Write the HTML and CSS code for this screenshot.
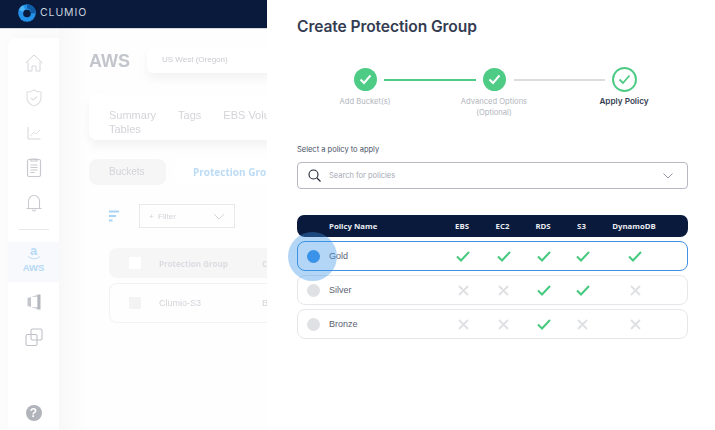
FILE: index.html
```html
<!DOCTYPE html>
<html lang="en">
<head>
<meta charset="utf-8">
<title>Create Protection Group</title>
<link rel="stylesheet" href="styles.css">
</head>
<body>
<div class="app">
  <section class="backdrop">
    <header class="topbar">
      <svg class="logo" width="18" height="18" viewBox="0 0 18 18"><circle cx="9" cy="9" r="8.800" fill="#2391e8"/><path d="M9 .200A8.800 8.800 0 0 1 17.800 9L13 9.500A4.500 4.500 0 0 0 9 4.500z" fill="#0f5ca6"/><path d="M1 5.500A8.800 8.800 0 0 1 5 1.200L7 5 4.600 8z" fill="#4db4f5"/><circle cx="9" cy="9.500" r="3.800" fill="#0a1a3c"/></svg>
      <span class="brand">CLUMIO</span>
    </header>
    <div class="shell">
      <nav class="sidebar">
        <svg class="nav-icon" width="20" height="20" viewBox="0 0 20 20" fill="none" stroke="#d5d6da" stroke-width="1"><path d="M1.500 10 10 2l8.500 8M4 8.500V18h4v-5h4v5h4V8.500"/></svg>
        <svg class="nav-icon" width="20" height="20" viewBox="0 0 20 20" fill="none" stroke="#e0e1e4" stroke-width="1.200"><path d="M10 2c2 1.500 4 2 7 2.200V10c0 4-3 6.500-7 8-4-1.500-7-4-7-8V4.200C6 4 8 3.500 10 2z"/><path d="m7 10 2 2 4-3.500"/></svg>
        <svg class="nav-icon" width="20" height="20" viewBox="0 0 20 20" fill="none" stroke="#d5d6da" stroke-width="1"><path d="M4 4v12h12.500"/><path d="m6 13 3.500-3.500 2.500 1.500 4-4" stroke="#e0e1e4"/></svg>
        <svg class="nav-icon" width="20" height="20" viewBox="0 0 20 20" fill="none" stroke="#c9cad0" stroke-width="1.200"><rect x="3.500" y="1.500" width="13" height="17" rx="1.500"/><path d="M7 1h6v2H7zM6.500 7h7M6.500 9.500h7M6.500 12h7M6.500 14.500h4"/></svg>
        <svg class="nav-icon" width="20" height="20" viewBox="0 0 20 20" fill="none" stroke="#c9cad0" stroke-width="1.100"><path d="M4.500 15V8a5.500 5.500 0 0 1 11 0v7M2.500 15.500h15M8.500 16.500a1.500 1.500 0 0 0 3 0"/></svg>
        <div class="nav-rule"></div>
        <div class="nav-aws">
          <span class="aws-a">a</span>
          <svg width="14" height="4" viewBox="0 0 14 4" fill="none" stroke="#bcdcf6" stroke-width="1"><path d="M1 .500c4 3 8 3 12 0"/></svg>
          <span class="aws-label">AWS</span>
        </div>
        <svg class="nav-icon" width="20" height="20" viewBox="0 0 20 20"><path d="M3.500 6 7 5v10l-3.500-1z" fill="#c4c6cc"/><path d="M7 5l7-2.500v15L7 15h6.500V5z" fill="#d4d5da"/><path d="M13.500 2.500h3v15h-3z" fill="#b5b7be"/></svg>
        <svg class="nav-icon" width="20" height="20" viewBox="0 0 20 20" fill="none" stroke="#bfc1c7" stroke-width="1.100"><rect x="7" y="2" width="11" height="11" rx="1.500"/><rect x="2" y="7.500" width="11" height="11" rx="1.500"/></svg>
        <div class="help">?</div>
      </nav>
      <main class="content">
        <div class="title-row">
          <h2 class="aws-title">AWS</h2>
          <div class="region">US West (Oregon)</div>
        </div>
        <div class="tabs"><div class="tab-line"><span>Summary</span><span>Tags</span><span>EBS Volumes</span></div><div>Tables</div></div>
        <div class="subtabs">
          <div class="subtab">Buckets</div>
          <div class="subtab active">Protection Groups</div>
        </div>
        <div class="filter-row">
          <svg width="12" height="12" viewBox="0 0 12 12" fill="none" stroke="#a9d3f5" stroke-width="1.800"><path d="M0 1.500h10M0 6h7M0 10.500h3.500"/></svg>
          <div class="filter"><span>+ &nbsp;Filter</span>
            <svg width="12" height="7" viewBox="0 0 12 7" fill="none" stroke="#d5d6da"><path d="m1 1 5 5 5-5"/></svg>
          </div>
        </div>
        <div class="bg-table-head"><i class="box white"></i><span class="pg">Protection Group</span><span>C</span></div>
        <div class="bg-table-row"><i class="box grey"></i><span class="pg">Clumio-S3</span><span>B</span></div>
      </main>
    </div>
  </section>

  <section class="panel">
    <h1 class="panel-title">Create Protection Group</h1>
    <div class="stepper">
      <div class="step">
        <span class="dot done"><svg width="13" height="11" viewBox="0 0 13 11" fill="none" stroke="#fff" stroke-width="2"><path d="m1.500 5.500 3.500 3.500 6.500-7.500"/></svg></span>
        <span class="step-label">Add Bucket(s)</span>
      </div>
      <div class="line green"></div>
      <div class="step">
        <span class="dot done"><svg width="13" height="11" viewBox="0 0 13 11" fill="none" stroke="#fff" stroke-width="2"><path d="m1.500 5.500 3.500 3.500 6.500-7.500"/></svg></span>
        <span class="step-label">Advanced Options<br>(Optional)</span>
      </div>
      <div class="line grey"></div>
      <div class="step">
        <span class="dot current"><svg width="13" height="11" viewBox="0 0 13 11" fill="none" stroke="#4ecb85" stroke-width="1.800"><path d="m1.500 5.500 3.500 3.500 6.500-7.500"/></svg></span>
        <span class="step-label strong">Apply Policy</span>
      </div>
    </div>
    <label class="field-label">Select a policy to apply</label>
    <div class="search">
      <svg width="13" height="13" viewBox="0 0 13 13" fill="none" stroke="#1c2230" stroke-width="1.100"><circle cx="5.500" cy="5.500" r="4.500"/><path d="m9 9 3.500 3.500"/></svg>
      <span class="placeholder">Search for policies</span>
      <svg class="chev" width="10" height="6" viewBox="0 0 10 6" fill="none" stroke="#8d93a0" stroke-width="1"><path d="m.5.500 4.500 4.500L9.500.500"/></svg>
    </div>
    <div class="table">
      <div class="row head"><span></span><span class="name">Policy Name</span><span>EBS</span><span>EC2</span><span>RDS</span><span>S3</span><span>DynamoDB</span></div>
      <div class="row policy selected"><i class="radio on"></i><span class="name">Gold</span>
        <svg class="yes" viewBox="0 0 14 11"><path d="m1 5.500 4 4 8-8.500"/></svg><svg class="yes" viewBox="0 0 14 11"><path d="m1 5.500 4 4 8-8.500"/></svg><svg class="yes" viewBox="0 0 14 11"><path d="m1 5.500 4 4 8-8.500"/></svg><svg class="yes" viewBox="0 0 14 11"><path d="m1 5.500 4 4 8-8.500"/></svg><svg class="yes" viewBox="0 0 14 11"><path d="m1 5.500 4 4 8-8.500"/></svg>
      </div>
      <div class="row policy"><i class="radio"></i><span class="name">Silver</span>
        <svg class="no" viewBox="0 0 11 11"><path d="m1 1 9 9M10 1l-9 9"/></svg><svg class="no" viewBox="0 0 11 11"><path d="m1 1 9 9M10 1l-9 9"/></svg><svg class="yes" viewBox="0 0 14 11"><path d="m1 5.500 4 4 8-8.500"/></svg><svg class="yes" viewBox="0 0 14 11"><path d="m1 5.500 4 4 8-8.500"/></svg><svg class="no" viewBox="0 0 11 11"><path d="m1 1 9 9M10 1l-9 9"/></svg>
      </div>
      <div class="row policy"><i class="radio"></i><span class="name">Bronze</span>
        <svg class="no" viewBox="0 0 11 11"><path d="m1 1 9 9M10 1l-9 9"/></svg><svg class="no" viewBox="0 0 11 11"><path d="m1 1 9 9M10 1l-9 9"/></svg><svg class="yes" viewBox="0 0 14 11"><path d="m1 5.500 4 4 8-8.500"/></svg><svg class="no" viewBox="0 0 11 11"><path d="m1 1 9 9M10 1l-9 9"/></svg><svg class="no" viewBox="0 0 11 11"><path d="m1 1 9 9M10 1l-9 9"/></svg>
      </div>
      <div class="pulse"></div>
    </div>
  </section>
</div>
</body>
</html>
```
FILE: styles.css
```css
* { box-sizing: border-box; }
html, body { margin: 0; height: 100%; overflow: hidden; background: #fff; }
body { font-family: "Liberation Sans", Arial, sans-serif; }
.app { display: flex; width: 715px; height: 430px; }

.backdrop { width: 267px; flex: none; overflow: hidden; display: flex; flex-direction: column; background: #fcfcfc; }
.topbar { height: 29px; flex: none; background: #0a1a3c; border-bottom: 1px solid #d6d8de; display: flex; align-items: center; padding: 0 0 3px 18px; gap: 4px; }
.logo { flex: none; }
.brand { color: #c9d2de; font: 400 10.500px "Inter", sans-serif; letter-spacing: .9px; }
.shell { flex: 1; display: flex; min-height: 0; filter: blur(.35px); }
.sidebar { width: 51px; margin: 9px 0 0 8px; flex: none; background: #fff; border-radius: 8px 0 0 0; box-shadow: 6px 0 12px rgba(220,222,228,.25); display: flex; flex-direction: column; align-items: center; padding-top: 15px; }
.nav-icon { display: block; margin-bottom: 15px; flex: none; }
.nav-rule { width: 30px; height: 1px; background: #e8e9ec; margin: 1px 0 12px; flex: none; }
.nav-aws { width: 100%; height: 40px; flex: none; background: #f7f9fc; display: flex; flex-direction: column; align-items: center; margin-bottom: 10px; color: #b6d9f6; padding-top: 2px; }
.aws-a { font: 700 13px/13px "Liberation Sans", sans-serif; }
.nav-aws svg { display: block; margin-top: -1px; }
.aws-label { font: 700 9.500px/11px "Liberation Sans", sans-serif; margin-top: 2px; }
.help { width: 16px; height: 16px; border-radius: 50%; background: #b2b4bb; color: #fff; font: 700 12px/16px "Liberation Sans", sans-serif; text-align: center; margin-top: auto; margin-bottom: 9px; flex: none; }

.content { flex: 1; min-width: 0; padding: 18px 0 0 30px; background: linear-gradient(90deg,#f8f8f9 0,#fefefe 28px); }
.title-row { display: flex; align-items: center; gap: 19px; height: 26px; }
.aws-title { margin: 0; color: #c3c5cc; font: 700 18px "Liberation Sans", sans-serif; width: 39px; flex: none; position: relative; top: 1px; }
.region { width: 130px; height: 26px; flex: none; background: #fff; font-size: 8px; line-height: 26px; padding-left: 15px; color: #c9cad0; box-shadow: 0 6px 9px rgba(215,217,224,.28); border-radius: 6px 0 0 6px; }
.tabs { width: 230px; height: 46px; margin-top: 21px; padding: 14px 0 0 20px; background: #fff; border-radius: 8px 0 0 8px; color: #d3d4d9; font-size: 11px; line-height: 14px; box-shadow: 0 6px 9px rgba(215,217,224,.28); white-space: nowrap; }
.tab-line { display: flex; gap: 22px; }
.subtabs { display: flex; margin-top: 19px; gap: 8px; height: 26px; }
.subtab { width: 77px; flex: none; border-radius: 8px; background: #f6f6f7; color: #d3d4d9; font-size: 10px; line-height: 25px; padding-left: 20px; }
.subtab.active { width: 120px; background: #fff; color: #bcdcf6; font: 700 10px/26px "Open Sans", sans-serif; padding-left: 19px; white-space: nowrap; }
.filter-row { display: flex; align-items: center; gap: 18px; margin-top: 19px; padding-left: 20px; height: 24px; }
.filter { width: 96px; height: 24px; flex: none; border: 1px solid #e8e9ec; display: flex; align-items: center; justify-content: space-between; padding: 0 9px; font-size: 8px; color: #d3d4d9; }
.bg-table-head, .bg-table-row { width: 200px; margin-left: 20px; display: flex; align-items: center; padding-left: 20px; font-size: 9px; color: #d3d4d9; }
.bg-table-head { height: 30px; margin-top: 20px; background: #f6f6f7; border-radius: 8px 0 0 8px; font: 700 8px "Open Sans", sans-serif; color: #dcdde0; }
.bg-table-row { height: 40px; margin-top: 5px; border: 1px solid #f2f2f4; border-right: 0; border-radius: 8px 0 0 8px; padding-left: 19px; }
.box { width: 12px; height: 12px; flex: none; margin-right: 18px; border-radius: 1px; }
.box.white { background: #fff; }
.box.grey { background: #f3f3f4; }
.pg { width: 103px; flex: none; }

.panel { flex: 1; min-width: 0; background: #fff; padding: 16px 27px 0 30px; }
.panel-title { margin: 0; color: #343c52; font: 600 15.600px/22px "Inter", sans-serif; letter-spacing: -.1px; }
.stepper { display: flex; align-items: flex-start; margin-top: 29px; height: 70px; padding-left: 32px; }
.step { width: 72px; flex: none; display: flex; flex-direction: column; align-items: center; }
.dot { width: 23px; height: 23px; border-radius: 50%; display: flex; align-items: center; justify-content: center; margin: 1px 0 5px; }
.dot.done { background: #4ecb85; }
.dot.current { width: 25px; height: 25px; margin: 0 0 4px; border: 2px solid #4ecb85; }
.step-label { font: 400 7.600px/11px "Inter", sans-serif; color: #b1b4bd; text-align: center; white-space: nowrap; }
.step-label.strong { color: #343c52; font-weight: 600; font-size: 8.200px; }
.line { height: 2px; flex: none; margin-top: 12px; }
.line.green { width: 92px; margin-left: -17px; margin-right: -18px; background: #4ecb85; }
.line.grey { width: 91px; margin-left: -16px; margin-right: -17px; background: #dcdde1; }
.field-label { display: block; margin-top: 7px; font: 400 7.500px/11px "Inter", sans-serif; color: #4a5165; }
.search { height: 27px; margin-top: 7px; border: 1px solid #b6b9c3; border-radius: 4px; display: flex; align-items: center; padding: 0 14px 0 10px; gap: 8px; }
.placeholder { flex: 1; font: 400 7.500px "Inter", sans-serif; color: #a6a9b4; }
.table { position: relative; margin-top: 26px; }
.row { display: grid; grid-template-columns: 32px 113px 40px 41px 40px 37px 68px; align-items: center; justify-items: center; }
.row .name { justify-self: start; }
.head { height: 22px; background: #0a1a3c; border-radius: 7px 7px 8px 8px; color: #e9ecf2; font: 700 7.800px "Open Sans", sans-serif; }
.policy { height: 30px; margin-top: 4px; border: 1.500px solid #e6e7ea; border-radius: 8px; font-size: 9px; color: #5c6272; }
.policy .name { margin-left: -1px; }
.policy + .policy { margin-top: 4px; }
.selected { border-color: #3f92e3; }
.radio { width: 13px; height: 13px; border-radius: 50%; background: #e0e1e4; margin-left: -2px; }
.radio.on { background: #3a93e8; position: relative; z-index: 1; }
.yes { width: 14px; height: 11px; fill: none; stroke: #45c97e; stroke-width: 2; }
.no { width: 11px; height: 11px; fill: none; stroke: #dfe0e3; stroke-width: 1.800; }
.pulse { position: absolute; left: -9px; top: 17px; width: 49px; height: 49px; border-radius: 50%; background: rgba(58,147,232,.38); pointer-events: none; }
```
